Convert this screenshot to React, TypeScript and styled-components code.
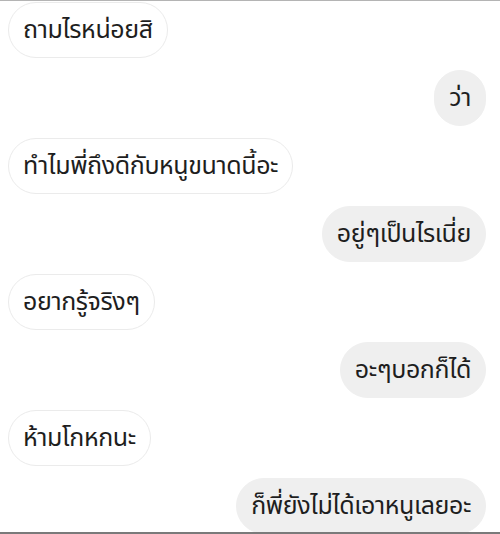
import React from "react";
import styled, { createGlobalStyle } from "styled-components";

const Global = createGlobalStyle`
  html, body { margin: 0; padding: 0; background: #ffffff; }
  * { box-sizing: border-box; }
`;

const Screen = styled.div`
  width: 500px;
  height: 534px;
  display: flex;
  flex-direction: column;
  border-top: 1px solid #b4b4b4;
  border-bottom: 2px solid #7a7a7a;
  overflow: hidden;
  background: #ffffff;
`;

const Thread = styled.div`
  flex: 1;
  display: flex;
  flex-direction: column;
  gap: 12px;
  padding: 1px 14px 0 8px;
  overflow: hidden;
`;

const Bubble = styled.div<{ $mine?: boolean }>`
  align-self: ${(p) => (p.$mine ? "flex-end" : "flex-start")};
  flex-shrink: 0;
  height: 56px;
  display: flex;
  align-items: center;
  padding: 0 14px 0 14px;
  border-radius: 28px;
  background: ${(p) => (p.$mine ? "#efefef" : "#ffffff")};
  border: 1px solid ${(p) => (p.$mine ? "#efefef" : "#ebebeb")};
  color: #1e1e1e;
  font-family: "Noto Sans Thai", "Noto Sans", "DejaVu Sans", sans-serif;
  font-size: 25px;
  letter-spacing: -0.4px;
  line-height: 1;
  white-space: nowrap;
`;

const messages: { text: string; mine: boolean }[] = [
  { text: "ถามไรหน่อยสิ", mine: false },
  { text: "ว่า", mine: true },
  { text: "ทำไมพี่ถึงดีกับหนูขนาดนี้อะ", mine: false },
  { text: "อยู่ๆเป็นไรเนี่ย", mine: true },
  { text: "อยากรู้จริงๆ", mine: false },
  { text: "อะๆบอกก็ได้", mine: true },
  { text: "ห้ามโกหกนะ", mine: false },
  { text: "ก็พี่ยังไม่ได้เอาหนูเลยอะ", mine: true },
];

export default function App() {
  return (
    <>
      <Global />
      <Screen>
        <Thread>
          {messages.map((m, i) => (
            <Bubble key={i} $mine={m.mine}>
              {m.text}
            </Bubble>
          ))}
        </Thread>
      </Screen>
    </>
  );
}
